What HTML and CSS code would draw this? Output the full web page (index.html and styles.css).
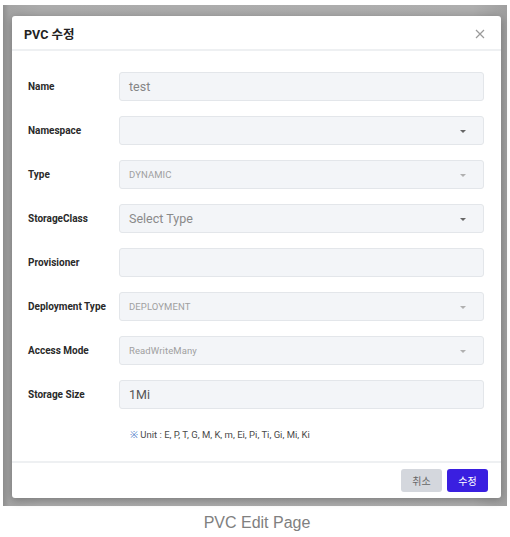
FILE: index.html
```html
<!DOCTYPE html>
<html lang="ko">
<head>
<meta charset="utf-8">
<link rel="stylesheet" href="styles.css">
</head>
<body>
<div class="shot">
  <div class="backdrop">
    <div class="modal">
      <div class="modal-header">
        <div class="title">PVC 수정</div>
        <svg class="close" width="10" height="10" viewBox="0 0 10 10"><path d="M1 1L9 9M9 1L1 9" stroke="#9a9a9a" stroke-width="1.2"/></svg>
      </div>
      <div class="modal-body">
        <div class="row"><div class="label">Name</div><div class="field"><span class="val">test</span></div></div>
        <div class="row"><div class="label">Namespace</div><div class="field select"><span class="val"></span><i class="caret"></i></div></div>
        <div class="row"><div class="label">Type</div><div class="field select disabled"><span class="val small">DYNAMIC</span><i class="caret"></i></div></div>
        <div class="row"><div class="label">StorageClass</div><div class="field select"><span class="val ph">Select Type</span><i class="caret"></i></div></div>
        <div class="row"><div class="label">Provisioner</div><div class="field"><span class="val"></span></div></div>
        <div class="row"><div class="label">Deployment Type</div><div class="field select disabled"><span class="val small">DEPLOYMENT</span><i class="caret"></i></div></div>
        <div class="row"><div class="label">Access Mode</div><div class="field select disabled"><span class="val small">ReadWriteMany</span><i class="caret"></i></div></div>
        <div class="row"><div class="label">Storage Size</div><div class="field"><span class="val dark">1Mi</span></div></div>
        <div class="note"><span class="mark">※</span> Unit : E, P, T, G, M, K, m, Ei, Pi, Ti, Gi, Mi, Ki</div>
      </div>
      <div class="modal-footer">
        <button class="btn cancel">취소</button>
        <button class="btn primary">수정</button>
      </div>
    </div>
  </div>
  <div class="caption">PVC Edit Page</div>
</div>
</body>
</html>
```
FILE: styles.css
```css
html, body { margin: 0; padding: 0; background: #fff; }
body { font-family: Roboto, "Noto Sans", "Noto Sans CJK KR", sans-serif; }
.shot { width: 510px; height: 537px; padding-top: 5px; box-sizing: border-box; }
.backdrop {
  margin-left: 3px;
  width: 504px; height: 501px;
  box-sizing: border-box;
  padding: 11px 0 0 9px;
  background: linear-gradient(90deg, #8f8f8f 0px, #a4a4a4 6px, #ababab 40px, #aeaeae 470px, #9f9f9f 504px);
}
.modal {
  width: 489px; height: 482px;
  background: #fff;
  border-radius: 3px;
  box-shadow: 0 2px 10px rgba(0,0,0,0.3);
  display: flex; flex-direction: column;
  box-sizing: border-box;
}
.modal-header {
  height: 35px; box-sizing: border-box;
  border-bottom: 2px solid #eef0f2;
  display: flex; align-items: center; justify-content: space-between;
  padding: 0 16px 0 12px;
}
.title { font-size: 12.5px; font-weight: 700; color: #222; padding-top: 1px; }
.close { margin-top: 2px; }
.modal-body { flex: 1; padding: 21px 17px 0 16px; display: flex; flex-direction: column; gap: 15px; }
.row { display: flex; align-items: center; height: 29px; }
.label { width: 91px; font-size: 10px; font-weight: 700; color: #2a2a2a; }
.field {
  flex: 1; height: 29px; box-sizing: border-box;
  background: #f3f5f8; border: 1px solid #e3e6ea; border-radius: 3px;
  display: flex; align-items: center; padding: 0 17px 0 9px;
  position: relative;
}
.val { flex: 1; font-size: 12.5px; color: #858585; }
.val.dark { color: #555; }
.val.ph { color: #8a8a8a; }
.val.small { font-size: 9.5px; color: #a0a0a0; letter-spacing: 0.1px; }
.caret { width: 0; height: 0; border-left: 3.5px solid transparent; border-right: 3.5px solid transparent; border-top: 3.5px solid #666; margin-top: 2px; }
.disabled .caret { border-top-color: #b0b0b0; }
.note { padding-left: 102px; font-size: 9.5px; color: #4a4a4a; margin-top: 4px; }
.mark { color: #3b6fc4; }
.modal-footer {
  height: 37px; box-sizing: border-box;
  border-top: 2px solid #eef0f2;
  display: flex; justify-content: flex-end; align-items: flex-start;
  padding: 6px 13px 0 0; gap: 5px;
}
.btn {
  width: 41px; height: 23px; border: none; border-radius: 3px;
  font-family: "Noto Sans CJK KR", sans-serif; font-size: 10px; padding: 0;
}
.cancel { background: #d4d7dd; color: #666; }
.primary { background: #3a1fe0; color: #fff; }
.caption { text-align: center; font-family: "Liberation Sans", Arial, sans-serif; font-size: 16px; color: #808080; margin-top: 8px; padding-left: 4px; }
```
